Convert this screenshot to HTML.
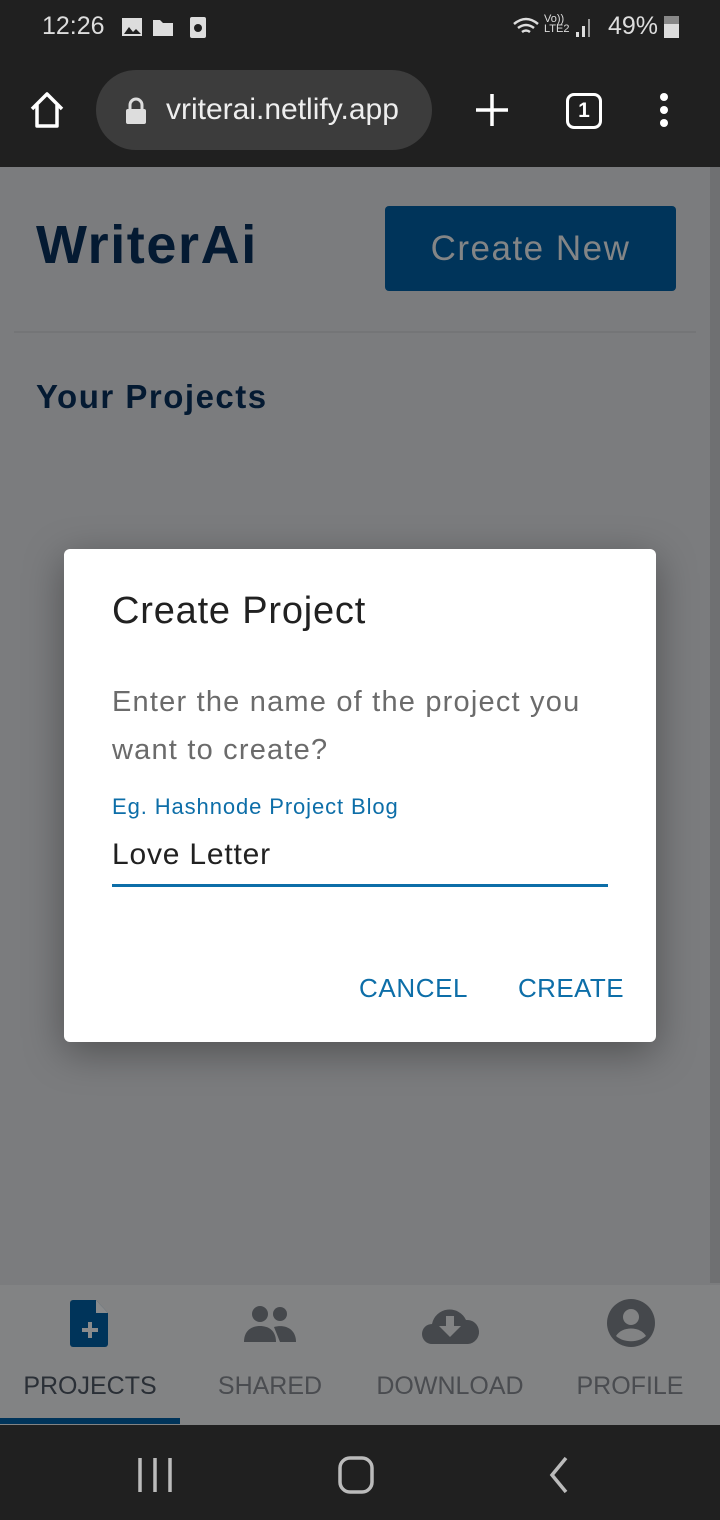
<!DOCTYPE html>
<html><head><meta charset="utf-8"><style>
*{margin:0;padding:0;box-sizing:border-box}
body{width:720px;height:1520px;position:relative;overflow:hidden;background:#7b7c7e;font-family:"Liberation Sans",sans-serif}
.abs{position:absolute}
</style></head><body>
<div class="abs" style="left:0;top:0;width:720px;height:167px;background:#202020"></div>
<div class="abs" style="left:42px;top:12px;color:#ddd;font-size:25px">12:26</div>
<svg class="abs" style="left:120px;top:16px" width="90" height="24"><rect x="2" y="2" width="20" height="18" fill="#ddd"/><path d="M4 18l5-7 4 5 3-3 5 5z" fill="#202020"/><path d="M33 4h7l3 3h10v13h-20z" fill="#ddd"/><rect x="70" y="1" width="16" height="21" rx="2" fill="#ddd"/><circle cx="78" cy="12" r="4" fill="#202020"/></svg>
<div class="abs" style="top:14px;color:#ddd;font-size:11px;line-height:10px;left:544px">Vo))<br>LTE2</div>
<svg class="abs" style="left:512px;top:14px" width="90" height="26"><path d="M2 10q12-10 24 0M6 14q8-6 16 0M10 18q4-3 8 0" stroke="#ddd" stroke-width="2.5" fill="none"/><rect x="64" y="18" width="3" height="5" fill="#ddd"/><rect x="70" y="12" width="3" height="11" fill="#ddd"/><rect x="76" y="5" width="2" height="18" fill="#999"/></svg>
<div class="abs" style="left:608px;top:12px;color:#ddd;font-size:25px">49%</div>
<div class="abs" style="left:664px;top:16px;width:15px;height:22px;background:#ddd;border-top:8px solid #888"></div>
<svg class="abs" style="left:28px;top:90px" width="40" height="40"><path d="M4 19L19 4l15 15M9 15v21h20V15" stroke="#fff" stroke-width="3.5" fill="none" stroke-linejoin="round"/></svg>
<div class="abs" style="left:96px;top:70px;width:336px;height:80px;border-radius:40px;background:#3c3c3c"></div>
<svg class="abs" style="left:124px;top:96px" width="24" height="30"><path d="M6 13V9a6 6 0 0112 0v4" stroke="#ddd" stroke-width="3" fill="none"/><rect x="2" y="13" width="20" height="15" rx="2" fill="#ddd"/></svg>
<div class="abs" style="left:166px;top:93px;color:#eee;font-size:30px">vriterai.netlify.app</div>
<svg class="abs" style="left:474px;top:92px" width="36" height="36"><path d="M18 2v32M2 18h32" stroke="#fff" stroke-width="3.5"/></svg>
<div class="abs" style="left:566px;top:93px;width:36px;height:36px;border:3.5px solid #fff;border-radius:8px;color:#fff;font-size:21px;text-align:center;line-height:29px;font-weight:bold">1</div>
<svg class="abs" style="left:654px;top:92px" width="20" height="36"><circle cx="10" cy="5" r="4" fill="#fff"/><circle cx="10" cy="18" r="4" fill="#fff"/><circle cx="10" cy="31" r="4" fill="#fff"/></svg>

<div class="abs" style="left:710px;top:167px;width:10px;height:1116px;background:#6f7072"></div>
<div class="abs" style="left:36px;top:214px;color:#041a32;font-size:54px;font-weight:bold;letter-spacing:1.6px">WriterAi</div>
<div class="abs" style="left:385px;top:206px;width:291px;height:85px;background:#00345a;border-radius:4px;color:#838586;font-size:35px;text-align:center;line-height:85px;letter-spacing:1.5px">Create New</div>
<div class="abs" style="left:14px;top:331px;width:682px;height:2px;background:#747577"></div>
<div class="abs" style="left:36px;top:378px;color:#041a32;font-size:33px;font-weight:bold;letter-spacing:1.5px">Your Projects</div>

<div class="abs" style="left:0;top:1285px;width:720px;height:140px;background:#828384"></div>
<svg class="abs" style="left:68px;top:1298px" width="44" height="50"><path d="M5 2h23l12 13v31a3 3 0 01-3 3H5a3 3 0 01-3-3V5a3 3 0 013-3z" fill="#00345a"/><path d="M28 2v13h12z" fill="#8a8b8c"/><path d="M22 24v16M14 32h16" stroke="#8a8b8c" stroke-width="4"/></svg>
<svg class="abs" style="left:242px;top:1304px" width="56" height="40"><circle cx="18" cy="10" r="8" fill="#45484c"/><circle cx="38" cy="10" r="7" fill="#45484c"/><path d="M2 38c0-12 8-16 16-16s16 4 16 16z" fill="#45484c"/><path d="M32 23c10-3 22 1 22 15H38z" fill="#45484c"/></svg>
<svg class="abs" style="left:420px;top:1302px" width="60" height="44"><path d="M12 42a10 10 0 010-20 18 18 0 0134-4 12 12 0 012 24z" fill="#45484c"/><path d="M26 14h8v10h7L30 35 19 24h7z" fill="#828384"/></svg>
<svg class="abs" style="left:606px;top:1298px" width="50" height="50"><circle cx="25" cy="25" r="24" fill="#45484c"/><circle cx="25" cy="19" r="8" fill="#828384"/><path d="M10 38c6-10 24-10 30 0-8 7-22 7-30 0z" fill="#828384"/></svg>
<div class="abs" style="left:0;top:1372px;width:180px;text-align:center;color:#2a2f36;font-size:25px">PROJECTS</div>
<div class="abs" style="left:180px;top:1372px;width:180px;text-align:center;color:#4a4c50;font-size:25px">SHARED</div>
<div class="abs" style="left:360px;top:1372px;width:180px;text-align:center;color:#4a4c50;font-size:25px">DOWNLOAD</div>
<div class="abs" style="left:540px;top:1372px;width:180px;text-align:center;color:#4a4c50;font-size:25px">PROFILE</div>
<div class="abs" style="left:0;top:1418px;width:180px;height:6px;background:#00345a"></div>
<div class="abs" style="left:0;top:1425px;width:720px;height:95px;background:#202020"></div>
<svg class="abs" style="left:130px;top:1450px" width="460" height="50"><path d="M10 8v34M25 8v34M40 8v34" stroke="#bbb" stroke-width="3.5"/><rect x="210" y="8" width="32" height="34" rx="10" stroke="#bbb" stroke-width="3.5" fill="none"/><path d="M436 8l-14 17 14 17" stroke="#bbb" stroke-width="3.5" fill="none"/></svg>

<div class="abs" style="left:64px;top:549px;width:592px;height:493px;background:#fff;border-radius:6px;box-shadow:0 10px 40px rgba(0,0,0,.35)"></div>
<div class="abs" style="left:112px;top:590px;color:#212121;font-size:38px;letter-spacing:0.8px">Create Project</div>
<div class="abs" style="left:112px;top:678px;width:500px;color:#6b6b6b;font-size:29px;line-height:48px;letter-spacing:1.2px">Enter the name of the project you want to create?</div>
<div class="abs" style="left:112px;top:794px;color:#0d6ea8;font-size:22px;letter-spacing:0.9px">Eg. Hashnode Project Blog</div>
<div class="abs" style="left:112px;top:838px;color:#212121;font-size:30px;letter-spacing:0.8px">Love Letter</div>
<div class="abs" style="left:112px;top:884px;width:496px;height:3px;background:#0d6ea8"></div>
<div class="abs" style="left:359px;top:973px;color:#0d6ea8;font-size:26px;letter-spacing:0.6px">CANCEL</div>
<div class="abs" style="left:518px;top:973px;color:#0d6ea8;font-size:26px;letter-spacing:0.4px">CREATE</div>
</body></html>
